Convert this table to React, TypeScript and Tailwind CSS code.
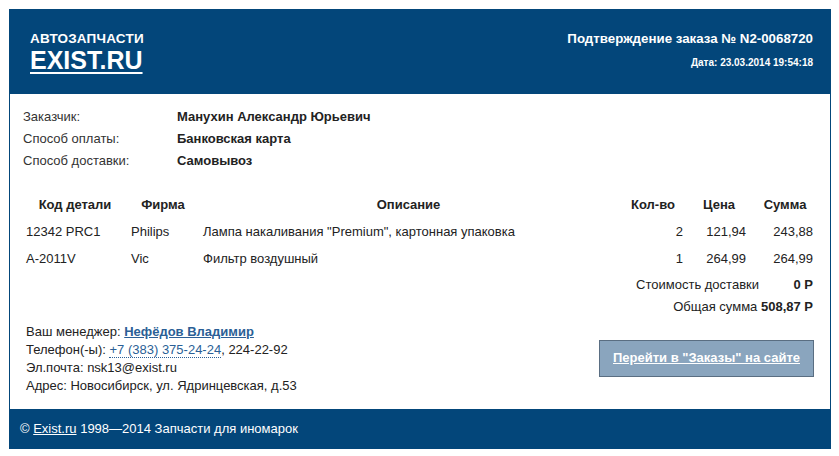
export default function App() {
  const items = [
    { code: '12342 PRC1', brand: 'Philips', desc: 'Лампа накаливания "Premium", картонная упаковка', qty: 2, price: '121,94', sum: '243,88' },
    { code: 'A-2011V', brand: 'Vic', desc: 'Фильтр воздушный', qty: 1, price: '264,99', sum: '264,99' },
  ];

  return (
    <div className="bg-white w-[839px] h-[456px] pt-[9px] pl-[9px] text-[13px] text-[#222]" style={{ fontFamily: '"Liberation Sans", Arial, sans-serif' }}>
      <div className="w-[822px] h-[440px] border border-[#03467a] flex flex-col">
        {/* header */}
        <div className="h-[84px] bg-[#03467a] text-white flex justify-between pl-[20px] pr-[17px] pt-[21px] shrink-0">
          <div className="font-bold">
            <div className="text-[13.5px] leading-[16px] tracking-[0.2px]">АВТОЗАПЧАСТИ</div>
            <div className="text-[25px] leading-[26px] underline underline-offset-[3px] decoration-[2px]">EXIST.RU</div>
          </div>
          <div className="font-bold text-right">
            <div className="text-[13.3px] leading-[16px]">Подтверждение заказа № N2-0068720</div>
            <div className="text-[10px] leading-[12px] mt-[10px]">Дата: 23.03.2014 19:54:18</div>
          </div>
        </div>

        {/* body */}
        <div className="flex-1 pl-[13px] pr-[10px] pt-[12px]">
          <div className="leading-[22px]">
            <div className="flex"><span className="w-[154px] text-[#333]">Заказчик:</span><b>Манухин Александр Юрьевич</b></div>
            <div className="flex"><span className="w-[154px] text-[#333]">Способ оплаты:</span><b>Банковская карта</b></div>
            <div className="flex"><span className="w-[154px] text-[#333]">Способ доставки:</span><b>Самовывоз</b></div>
          </div>

          <table className="mt-[19px] -ml-[1px] border-collapse table-fixed w-[797px]">
            <colgroup>
              <col className="w-[106px]" />
              <col className="w-[70px]" />
              <col className="w-[421px]" />
              <col className="w-[68px]" />
              <col className="w-[64px]" />
              <col className="w-[68px]" />
            </colgroup>
            <thead>
              <tr className="h-[27px] font-bold">
                <th className="text-center">Код детали</th>
                <th className="text-center">Фирма</th>
                <th className="text-center">Описание</th>
                <th className="text-center">Кол-во</th>
                <th className="text-center">Цена</th>
                <th className="text-center">Сумма</th>
              </tr>
            </thead>
            <tbody>
              {items.map((it) => (
                <tr key={it.code} className="h-[27px]">
                  <td className="px-[4px]">{it.code}</td>
                  <td className="px-[3px]">{it.brand}</td>
                  <td className="px-[5px]">{it.desc}</td>
                  <td className="px-[4px] text-right">{it.qty}</td>
                  <td className="px-[5px] text-right">{it.price}</td>
                  <td className="px-[6px] text-right">{it.sum}</td>
                </tr>
              ))}
              <tr className="h-[25px]">
                <td colSpan={6} className="px-[6px]">
                  <div className="flex justify-end">
                    <span>Стоимость доставки</span>
                    <span className="w-[54px] text-right font-bold">0 Р</span>
                  </div>
                </td>
              </tr>
              <tr className="h-[20px]">
                <td colSpan={6} className="text-right px-[6px]">Общая сумма <b>508,87 Р</b></td>
              </tr>
            </tbody>
          </table>

          <div className="mt-[6px] flex items-center justify-between pr-[6px]">
            <div className="leading-[18px] pl-[3px]">
              <div>
                Ваш менеджер: <a href="#" className="font-bold text-[#2b5f96] underline">Нефёдов Владимир</a>
              </div>
              <div>
                Телефон(-ы): <span className="text-[#2b5f96] border-b border-dotted border-[#2b5f96]">+7 (383) 375-24-24</span>, 224-22-92
              </div>
              <div>Эл.почта: nsk13@exist.ru</div>
              <div>Адрес: Новосибирск, ул. Ядринцевская, д.53</div>
            </div>
            <div className="w-[215px] h-[37px] mb-[2px] bg-[#8aa5be] border border-[#5a6e82] flex items-center justify-center">
              <a href="#" className="text-white font-bold underline text-[13px]">Перейти в "Заказы" на сайте</a>
            </div>
          </div>
        </div>

        {/* footer */}
        <div className="h-[39px] bg-[#03467a] text-white flex items-center pl-[10px] shrink-0">
          <span>
            © <a href="#" className="underline">Exist.ru</a> 1998—2014 Запчасти для иномарок
          </span>
        </div>
      </div>
    </div>
  );
}
